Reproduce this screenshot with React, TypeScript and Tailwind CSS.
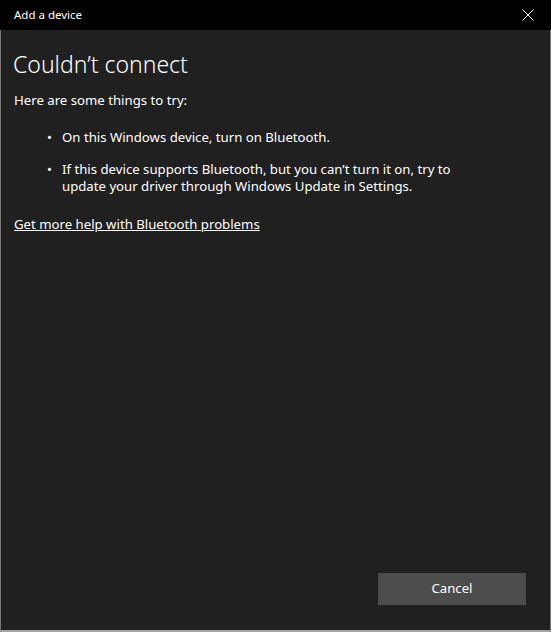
export default function App() {
  return (
    <div
      className="w-[551px] h-[632px] flex flex-col bg-[#202020] text-white"
      style={{ fontFamily: '"Noto Sans", "Open Sans", sans-serif' }}
    >
      <div className="h-[30px] shrink-0 bg-black flex items-center justify-between pl-[14px] pr-[17px]">
        <span className="text-[11.5px]">Add a device</span>
        <svg width="12" height="12" viewBox="0 0 12 12" className="text-white">
          <path d="M0.5 0.5 L11.5 11.5 M11.5 0.5 L0.5 11.5" stroke="currentColor" strokeWidth="1" />
        </svg>
      </div>
      <div className="flex-1 flex flex-col border-x border-[#777777] border-b-2 border-b-[#a5a5a5] px-[12px]">
        <h1 className="mt-[17px] text-[23px] font-light leading-[34px]">Couldn’t connect</h1>
        <p className="mt-[9px] ml-[1px] text-[13.2px] leading-[20px]">Here are some things to try:</p>
        <ul className="mt-[19px] ml-[34px] text-[13.2px] leading-[17px] flex flex-col gap-[15px]">
          <li className="flex">
            <span className="w-[15px] shrink-0">•</span>
            <span>On this Windows device, turn on Bluetooth.</span>
          </li>
          <li className="flex">
            <span className="w-[15px] shrink-0">•</span>
            <span>
              If this device supports Bluetooth, but you can’t turn it on, try to
              <br />
              update your driver through Windows Update in Settings.
            </span>
          </li>
        </ul>
        <a className="mt-[19px] ml-[1px] text-[13.2px] leading-[20px] underline self-start">
          Get more help with Bluetooth problems
        </a>
        <div className="mt-auto mb-[25px] flex justify-end pr-[12px]">
          <button className="w-[148px] h-[32px] bg-[#4c4c4c] text-[13.2px]">Cancel</button>
        </div>
      </div>
    </div>
  );
}
